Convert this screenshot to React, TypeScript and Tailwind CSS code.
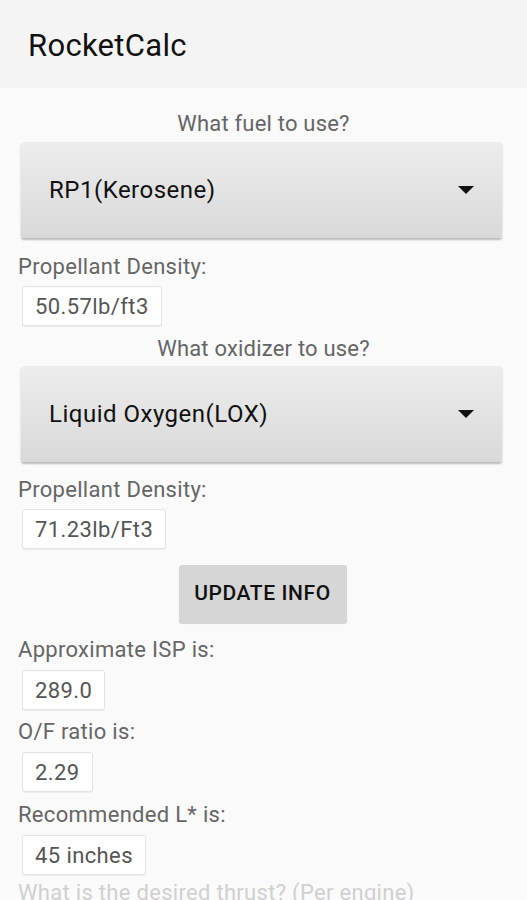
import React from "react";

const font = { fontFamily: "Roboto, 'Noto Sans', sans-serif" };

function Spinner({ value }: { value: string }) {
  return (
    <div className="ml-[21px] mr-[25px] h-[96px] rounded-[3px] bg-gradient-to-b from-[#ededed] to-[#d9d9d9] shadow-[0_2px_2px_rgba(0,0,0,0.25)] flex items-center justify-between pl-[28px] pr-[27px]">
      <span className="text-[24px] tracking-[0.5px] text-[#111]">{value}</span>
      <svg width="18" height="10" viewBox="0 0 18 10">
        <polygon points="1,1 17,1 9,9" fill="#111" />
      </svg>
    </div>
  );
}

function ValueBox({ value }: { value: string }) {
  return (
    <div className="ml-[22px] self-start h-[40px] px-[12px] flex items-center bg-white border border-[#e3e3e3] rounded-[3px] shadow-[0_1px_1px_rgba(0,0,0,0.06)]">
      <span className="text-[22px] tracking-[0.4px] text-[#555]">{value}</span>
    </div>
  );
}

function Label({ text, className = "" }: { text: string; className?: string }) {
  return (
    <div className={`pl-[18px] h-[28px] leading-[28px] text-[22px] tracking-[0.3px] text-[#666] whitespace-nowrap ${className}`}>
      {text}
    </div>
  );
}

export default function App() {
  return (
    <div className="w-[527px] h-[900px] overflow-hidden bg-[#fafafa]" style={font}>
      <header className="h-[88px] bg-[#f4f4f4] flex items-center pl-[28px]">
        <h1 className="text-[31px] tracking-[0.3px] text-[#111] mt-[4px]">RocketCalc</h1>
      </header>
      <main className="flex flex-col">
        <div className="mt-[22px] h-[28px] leading-[28px] text-center text-[22px] tracking-[0.2px] text-[#666]">What fuel to use?</div>
        <div className="mt-[4px]">
          <Spinner value="RP1(Kerosene)" />
        </div>
        <Label text="Propellant Density:" className="mt-[15px]" />
        <div className="mt-[5px] flex flex-col">
          <ValueBox value="50.57lb/ft3" />
        </div>
        <div className="mt-[9px] h-[28px] leading-[28px] text-center text-[22px] tracking-[0.2px] text-[#666]">What oxidizer to use?</div>
        <div className="mt-[3px]">
          <Spinner value="Liquid Oxygen(LOX)" />
        </div>
        <Label text="Propellant Density:" className="mt-[14px]" />
        <div className="mt-[5px] flex flex-col">
          <ValueBox value="71.23lb/Ft3" />
        </div>
        <div className="mt-[16px] flex justify-center">
          <button className="ml-[-2px] w-[168px] h-[58px] bg-[#d6d6d6] rounded-[3px] shadow-[0_1px_1px_rgba(0,0,0,0.15)] text-[21px] font-medium tracking-[0.6px] text-[#111]">
            UPDATE INFO
          </button>
        </div>
        <Label text="Approximate ISP is:" className="mt-[13px]" />
        <div className="mt-[6px] flex flex-col">
          <ValueBox value="289.0" />
        </div>
        <Label text="O/F ratio is:" className="mt-[8px]" />
        <div className="mt-[6px] flex flex-col">
          <ValueBox value="2.29" />
        </div>
        <Label text="Recommended L* is:" className="mt-[9px]" />
        <div className="mt-[6px] flex flex-col">
          <ValueBox value="45 inches" />
        </div>
        <Label text="What is the desired thrust? (Per engine)" className="mt-[4px] text-[#d0d0d0]" />
      </main>
    </div>
  );
}
